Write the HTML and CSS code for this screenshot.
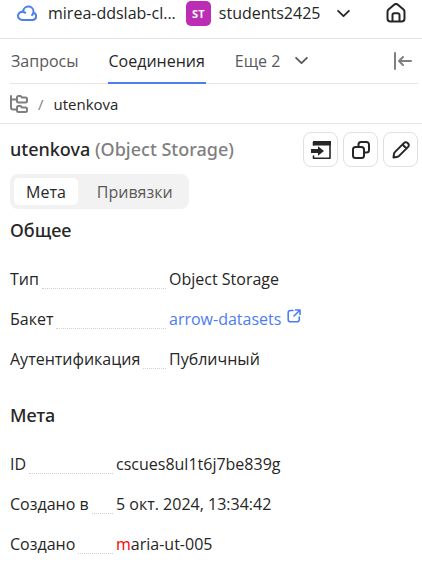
FILE: index.html
```html
<!DOCTYPE html>
<html lang="ru">
<head>
<meta charset="utf-8">
<meta name="viewport" content="width=device-width, initial-scale=1">
<title>utenkova</title>
<link rel="stylesheet" href="styles.css">
</head>
<body>
<header class="topbar">
  <svg class="icon cloud" viewBox="0 0 20 16" width="20" height="16"><path d="M5 15h10.500a3.700 3.700 0 0 0 .800-7.300A5.100 5.100 0 1 0 6.300 5.500L6.400 7A4.100 4.100 0 1 0 5 15ZM16.300 7.700c-.100 1-.500 1.700-1.200 2.300M6.400 7c.800.100 1.300.400 1.800.800"/></svg>
  <span class="cloud-name">mirea-ddslab-cl...</span>
  <span class="avatar">ST</span>
  <span class="folder-name">students2425</span>
  <button class="plain" aria-label="Выбрать каталог"><svg class="icon" viewBox="0 0 16 10" width="15" height="9"><path d="m2 2 6 6 6-6"/></svg></button>
  <a class="home" href="#" aria-label="Главная"><svg class="icon" viewBox="0 0 20 20" width="20" height="20"><path d="M1.500 8.800a3 3 0 0 1 1-2.200l5.300-4.700a3.300 3.300 0 0 1 4.400 0l5.300 4.700a3 3 0 0 1 1 2.200v6.700a3 3 0 0 1-3 3h-11a3 3 0 0 1-3-3ZM6.500 18.500V12A1.800 1.800 0 0 1 8.300 10.200h3.400A1.800 1.800 0 0 1 13.500 12v6.500"/></svg></a>
</header>
<nav class="tabs">
  <a class="tab" href="#">Запросы</a>
  <a class="tab active" href="#">Соединения</a>
  <button class="tab more">Еще 2<svg class="icon" viewBox="0 0 16 10" width="15" height="9"><path d="m2 2 6 6 6-6"/></svg></button>
  <button class="plain collapse" aria-label="Свернуть"><svg class="icon" viewBox="0 0 18 18" width="18" height="18"><path d="M1 1v16M17 9H5.500M9 5 5 9l4 4"/></svg></button>
</nav>
<nav class="crumbs">
  <svg class="icon" viewBox="0 0 18 18" width="18" height="18"><path d="M1 1v11.500a2 2 0 0 0 2 2h4M1 4.500h6M7 2.500A1.500 1.500 0 0 1 8.500 1h2l1.500 1.500h3.500A1.500 1.500 0 0 1 17 4v2a1.500 1.500 0 0 1-1.500 1.500h-7A1.500 1.500 0 0 1 7 6ZM7 12.500A1.500 1.500 0 0 1 8.500 11h2l1.500 1.500h3.500A1.500 1.500 0 0 1 17 14v1.500a1.500 1.500 0 0 1-1.500 1.500h-7A1.500 1.500 0 0 1 7 15.500Z"/></svg>
  <span class="slash">/</span>
  <a href="#">utenkova</a>
</nav>
<main>
  <div class="heading">
    <h1>utenkova <span>(Object Storage)</span></h1>
    <button class="tool" aria-label="Открыть"><svg class="icon" viewBox="0 0 20 20" width="20" height="20"><path class="thin" d="M2.500 5V2.500h16.500v15.700h-16.500V16"/><path class="solid" d="M2 1h18v4.500H2ZM0 9h7V6.200l6 4.800-6 4.800V13H0Z"/></svg></button>
    <button class="tool" aria-label="Копировать"><svg class="icon" viewBox="0 0 18 18" width="18" height="18"><rect x="1" y="6" width="11" height="11" rx="2.500"/><path d="M6.500 6V3.500A2.500 2.500 0 0 1 9 1h5.500A2.500 2.500 0 0 1 17 3.500V9a2.500 2.500 0 0 1-2.500 2.500H12"/></svg></button>
    <button class="tool" aria-label="Редактировать"><svg class="icon" viewBox="0 0 18 18" width="18" height="18"><path d="m1.500 16.500.400-3.200a4 4 0 0 1 1.200-2.400l9-9a2.400 2.400 0 0 1 3.400 0l.600.600a2.400 2.400 0 0 1 0 3.400l-9 9a4 4 0 0 1-2.400 1.200ZM10.500 3.500l4 4"/></svg></button>
  </div>
  <div class="segmented">
    <button class="selected">Мета</button>
    <button>Привязки</button>
  </div>
  <section>
    <h2>Общее</h2>
    <dl class="wide">
      <dt>Тип</dt><dd>Object Storage</dd>
      <dt>Бакет</dt><dd><a href="#">arrow-datasets<svg class="icon thin" viewBox="0 0 14 14" width="14" height="14"><path d="M6 1.500H3.500a2.300 2.300 0 0 0-2.300 2.300v6.700a2.300 2.300 0 0 0 2.300 2.300h6.500a2.300 2.300 0 0 0 2.300-2.300V8M8.500 1H13v4.500M13 1 7 7"/></svg></a></dd>
      <dt>Аутентификация</dt><dd>Публичный</dd>
    </dl>
  </section>
  <section>
    <h2>Мета</h2>
    <dl>
      <dt>ID</dt><dd>cscues8ul1t6j7be839g</dd>
      <dt>Создано в</dt><dd>5 окт. 2024, 13:34:42</dd>
      <dt>Создано</dt><dd class="user">maria-ut-005</dd>
    </dl>
  </section>
</main>
</body>
</html>
```
FILE: styles.css
```css
* {
  box-sizing: border-box;
}

body {
  margin: 0;
  background: #fff;
  color: #262626;
  font: 16px/20px "Open Sans", "Noto Sans", sans-serif;
}

a {
  color: inherit;
  text-decoration: none;
}

button {
  padding: 0;
  border: 0;
  background: none;
  color: inherit;
  font: inherit;
  cursor: pointer;
}

h1,
h2,
dl,
dd {
  margin: 0;
}

.icon {
  display: block;
  flex: none;
  fill: none;
  stroke: currentColor;
  stroke-width: 2;
  stroke-linecap: round;
  stroke-linejoin: round;
}

.thin {
  stroke-width: 1.6;
}

.solid {
  fill: currentColor;
  stroke: none;
}

.topbar {
  display: flex;
  align-items: center;
  height: 39px;
  padding: 0 16px 12px 17px;
  border-bottom: 1px solid #e5e5e5;
}

.cloud {
  margin-right: 11px;
  color: #4d7df2;
}

.avatar {
  width: 25px;
  height: 25px;
  margin: 0 8px 0 10px;
  border-radius: 5px;
  background: #bb2db5;
  color: #fff;
  font-size: 11px;
  font-weight: 700;
  line-height: 25px;
  text-align: center;
}

.folder-name {
  margin-right: 16px;
}

.home {
  margin-left: auto;
}

.tabs {
  display: flex;
  height: 45px;
  margin: 0 4px 0 10px;
  border-bottom: 1px solid #e5e5e5;
  color: #595959;
}

.tab {
  display: flex;
  align-items: center;
  height: 45px;
  margin-right: 28px;
  padding: 0 1px;
  border-bottom: 2px solid transparent;
}

.active {
  border-color: #4d7df2;
  color: #262626;
}

.more {
  gap: 14px;
}

.collapse {
  margin-left: auto;
  padding-right: 6px;
  color: #7f7f7f;
}

.crumbs {
  display: flex;
  align-items: center;
  gap: 10px;
  height: 40px;
  padding: 0 10px;
  border-bottom: 1px solid #e5e5e5;
  font-size: 15px;
}

.crumbs .icon,
.slash {
  color: #7f7f7f;
}

main {
  padding: 8px 4px 8px 10px;
}

.heading {
  display: flex;
  gap: 5px;
}

h1,
h2 {
  font-family: "Noto Sans", "Open Sans", sans-serif;
  font-size: 18px;
  font-weight: 500;
  line-height: 24px;
}

h1 {
  flex: 1;
  line-height: 35px;
}

h1 span {
  color: #7f7f7f;
}

.tool {
  display: grid;
  place-items: center;
  width: 35px;
  height: 35px;
  border: 1px solid #e0e0e0;
  border-radius: 8px;
}

.segmented {
  display: inline-flex;
  gap: 7px;
  margin-top: 7px;
  padding: 4px;
  border-radius: 8px;
  background: #f2f2f2;
  color: #595959;
}

.segmented button {
  height: 27px;
  padding: 0 12px;
  border-radius: 5px;
}

.segmented .selected {
  background: #fff;
  color: #262626;
}

section {
  margin-bottom: 34px;
}

h2 {
  margin: 9px 0 16px;
}

dl {
  display: grid;
  grid-template-columns: 103px 1fr;
  column-gap: 3px;
  row-gap: 20px;
  padding-top: 11px;
}

.wide {
  grid-template-columns: 156px 1fr;
}

dt {
  display: flex;
  gap: 3px;
}

dt::after {
  flex: 1;
  border-bottom: 1px dotted #d0d0d0;
  content: "";
}

dd a {
  display: flex;
  gap: 6px;
  color: #4d7df2;
}

.user::first-letter {
  color: #f00;
}
```
